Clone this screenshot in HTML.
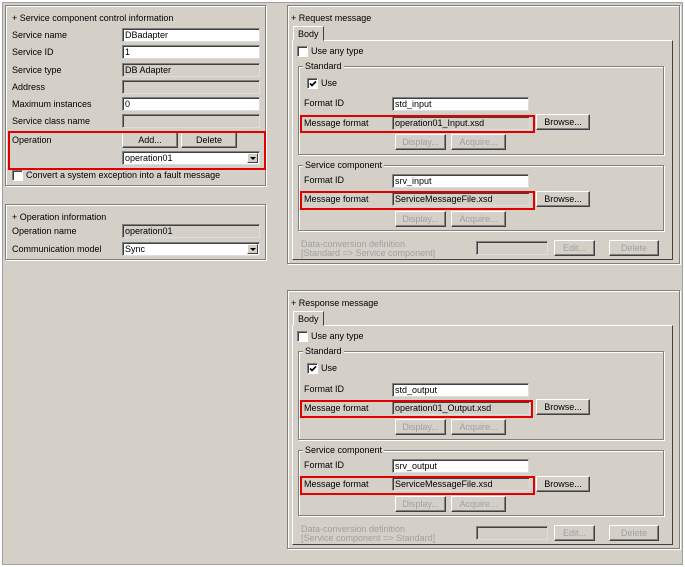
<!DOCTYPE html><html><head><style>
*{box-sizing:border-box;margin:0;padding:0}
body{width:685px;height:567px;background:#fff;font-family:"Liberation Sans",sans-serif;font-size:9px;color:#000;position:relative;overflow:hidden}
#bg{position:absolute;left:2px;top:2px;width:681px;height:563px;background:#d4d0c8;border:1px solid #a0a0a0}
.a{position:absolute}
.p{position:absolute;border:1px solid #808080;box-shadow:1px 1px 0 #fff,inset 1px 1px 0 #fff}
.t{position:absolute;white-space:nowrap;line-height:10px}
.in{position:absolute;height:14px;background:#fff;border:1px solid #808080;border-right-color:#ddd;border-bottom-color:#ddd;box-shadow:inset 1px 1px 0 #404040;padding-left:2px;line-height:12px;white-space:nowrap}
.ro{background:#d4d0c8}
.b{position:absolute;height:16px;background:#d4d0c8;border:1px solid;border-color:#fff #404040 #404040 #fff;box-shadow:inset -1px -1px 0 #808080;text-align:center;line-height:14px}
.dis{color:#a0a0a0}
.red{position:absolute;border:2px solid #e00000}
.cb{position:absolute;width:11px;height:11px;background:#fff;border:1px solid #808080;border-right-color:#fff;border-bottom-color:#fff;box-shadow:inset 1px 1px 0 #404040}
.cb svg{position:absolute;left:1px;top:1px}
.g{position:absolute;border:1px solid #808080;box-shadow:1px 1px 0 #fff,inset 1px 1px 0 #fff}
.gl{position:absolute;background:#d4d0c8;padding:0 2px;top:-6px;left:4px;line-height:10px;white-space:nowrap}
.dd{position:absolute;right:1px;top:1px;width:11px;height:10px;background:#d4d0c8;border:1px solid;border-color:#fff #404040 #404040 #fff}
.dd:after{content:"";position:absolute;left:2px;top:3px;border:3px solid transparent;border-top:3px solid #000;border-bottom:0}
</style></head><body><div id="bg"></div>

<div class="p" style="left:5px;top:5px;width:261px;height:181px"></div>
<div class="t" style="left:12px;top:13px">+ Service component control information</div>
<div class="t" style="left:12px;top:30px">Service name</div><div class="in" style="left:122px;top:28px;width:138px">DBadapter</div>
<div class="t" style="left:12px;top:47px">Service ID</div><div class="in" style="left:122px;top:45px;width:138px">1</div>
<div class="t" style="left:12px;top:65px">Service type</div><div class="in ro" style="left:122px;top:63px;width:138px">DB Adapter</div>
<div class="t" style="left:12px;top:82px">Address</div><div class="in ro" style="left:122px;top:80px;width:138px"></div>
<div class="t" style="left:12px;top:99px">Maximum instances</div><div class="in" style="left:122px;top:97px;width:138px">0</div>
<div class="t" style="left:12px;top:116px">Service class name</div><div class="in ro" style="left:122px;top:114px;width:138px"></div>
<div class="t" style="left:12px;top:135px">Operation</div>
<div class="b" style="left:122px;top:132px;width:56px">Add...</div><div class="b" style="left:181px;top:132px;width:56px">Delete</div>
<div class="in" style="left:122px;top:151px;width:138px">operation01<div class="dd"></div></div>
<div class="red" style="left:8px;top:131px;width:258px;height:39px"></div>
<div class="cb" style="left:12px;top:170px"></div><div class="t" style="left:26px;top:170px">Convert a system exception into a fault message</div>

<div class="p" style="left:5px;top:204px;width:261px;height:56px"></div>
<div class="t" style="left:12px;top:212px">+ Operation information</div>
<div class="t" style="left:12px;top:226px">Operation name</div><div class="in ro" style="left:122px;top:224px;width:138px">operation01</div>
<div class="t" style="left:12px;top:244px">Communication model</div><div class="in" style="left:122px;top:242px;width:138px">Sync<div class="dd"></div></div>

<div class="a" style="left:0;top:0;width:685px;height:270px">
<div class="p" style="left:287px;top:5px;width:393px;height:259px"></div>
<div class="t" style="left:291px;top:13px">+ Request message</div>
<div class="a" style="left:292px;top:40px;width:381px;height:220px;border:1px solid;border-color:#fff #404040 #404040 #fff"></div>
<div class="a" style="left:293px;top:26px;width:31px;height:15px;background:#d4d0c8;border:1px solid;border-color:#fff #404040 transparent #fff;padding:2px 0 0 4px">Body</div>
<div class="cb" style="left:297px;top:46px"></div><div class="t" style="left:311px;top:46px">Use any type</div>
<div class="g" style="left:298px;top:66px;width:366px;height:89px"><div class="gl">Standard</div></div>
<div class="cb" style="left:307px;top:78px"><svg width="8" height="8"><path d="M1 3.5L3 5.5L7 1.5" stroke="#000" stroke-width="1.6" fill="none"/></svg></div><div class="t" style="left:321px;top:78px">Use</div>
<div class="t" style="left:304px;top:98px">Format ID</div><div class="in" style="left:392px;top:97px;width:137px">std_input</div>
<div class="t" style="left:304px;top:118px">Message format</div><div class="in ro" style="left:392px;top:116px;width:138px">operation01_Input.xsd</div>
<div class="b" style="left:536px;top:114px;width:54px">Browse...</div>
<div class="red" style="left:300px;top:115px;width:235px;height:18px"></div>
<div class="b dis" style="left:395px;top:134px;width:51px">Display...</div><div class="b dis" style="left:451px;top:134px;width:55px">Acquire...</div>
<div class="g" style="left:298px;top:165px;width:366px;height:66px"><div class="gl">Service component</div></div>
<div class="t" style="left:304px;top:175px">Format ID</div><div class="in" style="left:392px;top:174px;width:137px">srv_input</div>
<div class="t" style="left:304px;top:194px">Message format</div><div class="in ro" style="left:392px;top:192px;width:138px">ServiceMessageFile.xsd</div>
<div class="b" style="left:536px;top:191px;width:54px">Browse...</div>
<div class="red" style="left:300px;top:191px;width:235px;height:19px"></div>
<div class="b dis" style="left:395px;top:211px;width:51px">Display...</div><div class="b dis" style="left:451px;top:211px;width:55px">Acquire...</div>
<div class="t dis" style="left:301px;top:240px;line-height:9px">Data-conversion definition<br>[Standard =&gt; Service component]</div>
<div class="in ro" style="left:476px;top:241px;width:72px"></div>
<div class="b dis" style="left:554px;top:240px;width:41px">Edit...</div><div class="b dis" style="left:609px;top:240px;width:50px">Delete</div>
</div>

<div class="a" style="left:0;top:285px;width:685px;height:270px">
<div class="p" style="left:287px;top:5px;width:393px;height:259px"></div>
<div class="t" style="left:291px;top:13px">+ Response message</div>
<div class="a" style="left:292px;top:40px;width:381px;height:220px;border:1px solid;border-color:#fff #404040 #404040 #fff"></div>
<div class="a" style="left:293px;top:26px;width:31px;height:15px;background:#d4d0c8;border:1px solid;border-color:#fff #404040 transparent #fff;padding:2px 0 0 4px">Body</div>
<div class="cb" style="left:297px;top:46px"></div><div class="t" style="left:311px;top:46px">Use any type</div>
<div class="g" style="left:298px;top:66px;width:366px;height:89px"><div class="gl">Standard</div></div>
<div class="cb" style="left:307px;top:78px"><svg width="8" height="8"><path d="M1 3.5L3 5.5L7 1.5" stroke="#000" stroke-width="1.6" fill="none"/></svg></div><div class="t" style="left:321px;top:78px">Use</div>
<div class="t" style="left:304px;top:99px">Format ID</div><div class="in" style="left:392px;top:98px;width:137px">std_output</div>
<div class="t" style="left:304px;top:118px">Message format</div><div class="in ro" style="left:392px;top:116px;width:138px">operation01_Output.xsd</div>
<div class="b" style="left:536px;top:114px;width:54px">Browse...</div>
<div class="red" style="left:300px;top:115px;width:233px;height:18px"></div>
<div class="b dis" style="left:395px;top:134px;width:51px">Display...</div><div class="b dis" style="left:451px;top:134px;width:55px">Acquire...</div>
<div class="g" style="left:298px;top:165px;width:366px;height:66px"><div class="gl">Service component</div></div>
<div class="t" style="left:304px;top:175px">Format ID</div><div class="in" style="left:392px;top:174px;width:137px">srv_output</div>
<div class="t" style="left:304px;top:194px">Message format</div><div class="in ro" style="left:392px;top:192px;width:138px">ServiceMessageFile.xsd</div>
<div class="b" style="left:536px;top:191px;width:54px">Browse...</div>
<div class="red" style="left:300px;top:191px;width:235px;height:19px"></div>
<div class="b dis" style="left:395px;top:211px;width:51px">Display...</div><div class="b dis" style="left:451px;top:211px;width:55px">Acquire...</div>
<div class="t dis" style="left:301px;top:240px;line-height:9px">Data-conversion definition<br>[Service component =&gt; Standard]</div>
<div class="in ro" style="left:476px;top:241px;width:72px"></div>
<div class="b dis" style="left:554px;top:240px;width:41px">Edit...</div><div class="b dis" style="left:609px;top:240px;width:50px">Delete</div>
</div>
</body></html>
